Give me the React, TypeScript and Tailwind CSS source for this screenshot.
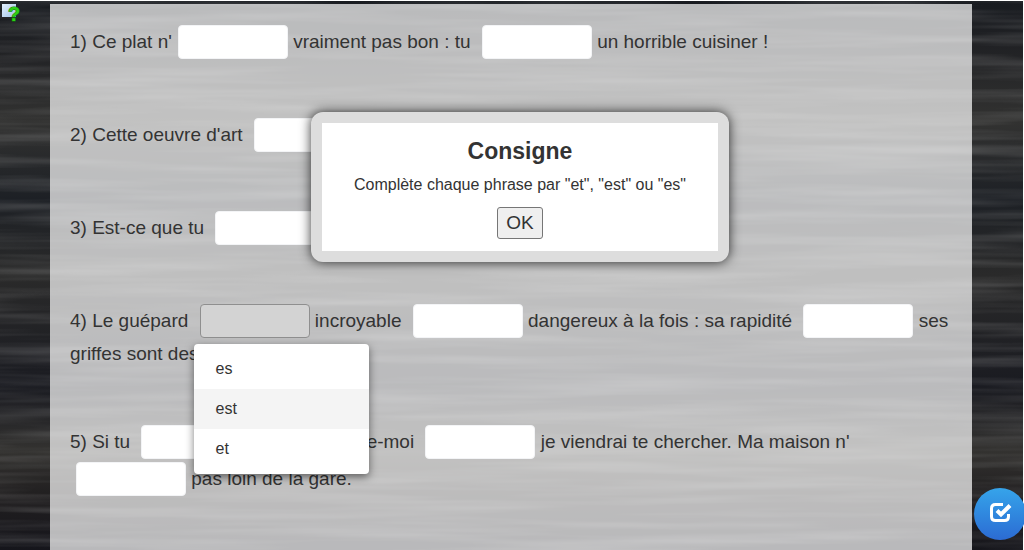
import { useState } from "react";

const CHOICES = ["es", "est", "et"];

function WoodBackground() {
  return (
    <svg className="absolute inset-0 h-full w-full" aria-hidden="true">
      <defs>
        <linearGradient id="wood" x1="0" y1="0" x2="0" y2="1">
          <stop offset="0" stopColor="#181b20" />
          <stop offset="0.08" stopColor="#202124" />
          <stop offset="0.22" stopColor="#323231" />
          <stop offset="0.36" stopColor="#1d2025" />
          <stop offset="0.5" stopColor="#2a2a2a" />
          <stop offset="0.7" stopColor="#1a1b21" />
          <stop offset="0.82" stopColor="#333230" />
          <stop offset="0.9" stopColor="#211f20" />
          <stop offset="1" stopColor="#15151b" />
        </linearGradient>
        <filter id="grain" x="0" y="0" width="100%" height="100%">
          <feTurbulence type="fractalNoise" baseFrequency="0.004 0.09" numOctaves="3" seed="7" />
          <feColorMatrix values="0 0 0 0 0.5  0 0 0 0 0.5  0 0 0 0 0.5  0.5 0 0 0 -0.2" />
        </filter>
      </defs>
      <rect width="100%" height="100%" fill="url(#wood)" />
      <rect width="100%" height="100%" filter="url(#grain)" />
    </svg>
  );
}

function HelpIcon() {
  return (
    <svg width="24" height="28" viewBox="0 0 24 28" aria-hidden="true">
      <defs>
        <linearGradient id="sheet" x1="0" y1="0" x2="1" y2="1">
          <stop offset="0" stopColor="#e4f1ff" />
          <stop offset="1" stopColor="#9fc3e6" />
        </linearGradient>
      </defs>
      <rect x="2" y="3" width="14" height="13" fill="url(#sheet)" />
      <text
        x="8"
        y="20"
        fontSize="20"
        className="font-['Liberation_Sans'] font-bold"
        fill="#2fd016"
        stroke="#0d7a06"
        strokeWidth="1"
        paintOrder="stroke"
      >
        ?
      </text>
    </svg>
  );
}

function Gap({ label }: { label: string }) {
  return (
    <select
      aria-label={label}
      defaultValue=""
      className="mt-px mb-0.5 ml-1.5 h-[34px] w-[110px] appearance-none rounded border border-gray-100 bg-white px-2 align-middle"
    >
      <option value=""></option>
      {CHOICES.map((c) => (
        <option key={c}>{c}</option>
      ))}
    </select>
  );
}

function OpenGap({ label }: { label: string }) {
  const [open, setOpen] = useState(true);
  const [value, setValue] = useState("");

  return (
    <span className="relative mt-px mb-0.5 ml-1.5 inline-block h-[34px] w-[110px] align-middle">
      <button
        type="button"
        aria-label={label}
        aria-expanded={open}
        onClick={() => setOpen(!open)}
        className="block h-full w-full rounded border border-[#8f8f8f] bg-[#d3d3d3] px-2 text-left"
      >
        {value}
      </button>
      {open && (
        <span className="absolute top-10 -left-1.5 z-10 flex w-[175px] flex-col rounded-sm bg-white py-[5px] text-base shadow-[0_3px_8px_rgba(0,0,0,0.5)]">
          {CHOICES.map((c) => (
            <button
              key={c}
              type="button"
              onClick={() => {
                setValue(c);
                setOpen(false);
              }}
              className={c === "est" ? "h-10 bg-[#f4f4f4] px-[22px] text-left" : "h-10 px-[22px] text-left"}
            >
              {c}
            </button>
          ))}
        </span>
      )}
    </span>
  );
}

export default function App() {
  const [showInstruction, setShowInstruction] = useState(true);

  return (
    <div className="relative flex min-h-screen flex-col overflow-hidden border-t border-r border-white bg-[#222] font-['Liberation_Sans',Arial,sans-serif] text-[19px] leading-7 text-[#333]">
      <WoodBackground />

      <button
        type="button"
        aria-label="Aide"
        onClick={() => setShowInstruction(true)}
        className="absolute top-0 left-0"
      >
        <HelpIcon />
      </button>

      <main className="relative mt-[3px] mr-[51px] ml-[50px] flex grow flex-col gap-14 bg-white/70 px-5 pt-5">
        <p>
          1) Ce plat n'
          <Gap label="Phrase 1, mot 1" /> vraiment pas bon : tu <Gap label="Phrase 1, mot 2" /> un horrible cuisiner !
        </p>
        <p>
          2) Cette oeuvre d'art <Gap label="Phrase 2" />
        </p>
        <p>
          3) Est-ce que tu <Gap label="Phrase 3" />
        </p>
        <p>
          4) Le guépard <OpenGap label="Phrase 4, mot 1" /> incroyable <Gap label="Phrase 4, mot 2" /> dangereux à la
          fois : sa rapidité <Gap label="Phrase 4, mot 3" /> ses griffes sont des
        </p>
        <p>
          5) Si tu <Gap label="Phrase 5, mot 1" /> perdu, appelle-moi <Gap label="Phrase 5, mot 2" /> je viendrai te
          chercher. Ma maison n'
          <Gap label="Phrase 5, mot 3" /> pas loin de la gare.
        </p>
      </main>

      {/* Consigne */}
      {showInstruction && (
        <div className="pointer-events-none fixed inset-x-0 top-28 z-20 flex justify-center pl-4">
          <div
            role="dialog"
            aria-labelledby="consigne"
            className="pointer-events-auto flex flex-col items-center rounded-xl bg-[#ddd] p-[11px] shadow-[0_0_12px_rgba(0,0,0,0.8)]"
          >
            <div className="flex flex-col items-center bg-white px-8 pt-3 pb-3">
              <h1 id="consigne" className="text-[23px] leading-8 font-bold">
                Consigne
              </h1>
              <p className="mt-1.5 text-base">Complète chaque phrase par "et", "est" ou "es"</p>
              <button
                type="button"
                onClick={() => setShowInstruction(false)}
                className="mt-2.5 h-8 rounded-[3px] border border-[#767676] bg-[#efefef] px-2 leading-7"
              >
                OK
              </button>
            </div>
          </div>
        </div>
      )}

      {/* Bouton de validation */}
      <button
        type="button"
        aria-label="Valider"
        className="fixed -right-0.5 bottom-2.5 flex size-[52px] items-center justify-center rounded-full bg-linear-to-b from-[#36a4ea] to-[#2c6bd3]"
      >
        <svg width="24" height="24" viewBox="0 0 24 24" fill="none" stroke="#fff" aria-hidden="true">
          <path d="M15 2.500H7.500Q3.500 2.500 3.500 6.500V14.500Q3.500 18.500 7.500 18.500H16.500Q20.500 18.500 20.500 14.500V12" strokeWidth="3" />
          <path d="M9 8.500L13 12.500L22 3.500" strokeWidth="4" />
        </svg>
      </button>
    </div>
  );
}
